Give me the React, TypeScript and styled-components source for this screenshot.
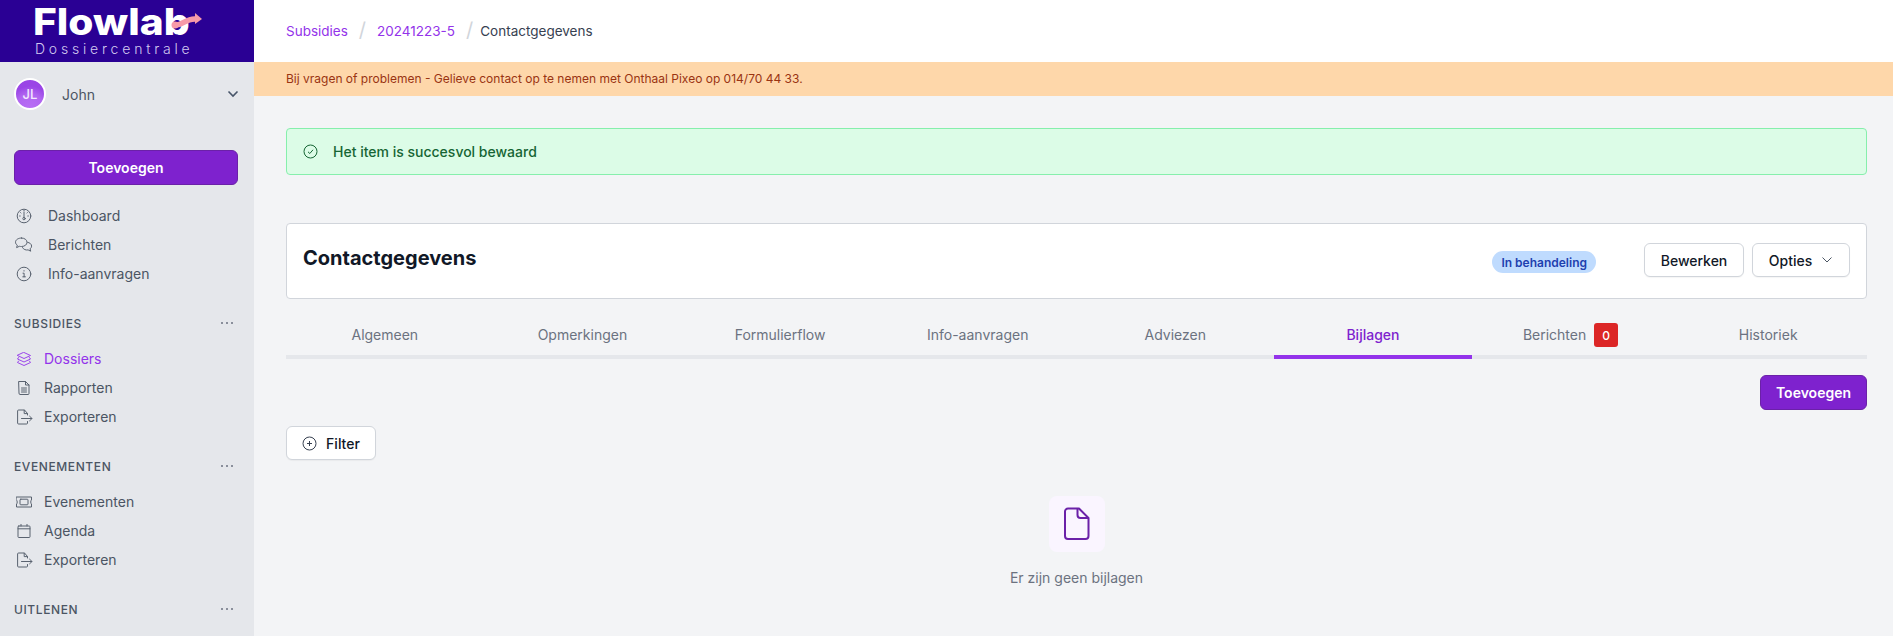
import React from 'react';
import styled, { createGlobalStyle } from 'styled-components';

const GlobalStyle = createGlobalStyle`
  html, body {
    margin: 0;
    padding: 0;
    height: 100%;
    overflow: hidden;
    background: #f3f4f6;
    font-family: Inter, "Liberation Sans", sans-serif;
  }
  * { box-sizing: border-box; }
`;

const Layout = styled.div`
  display: flex;
  width: 1893px;
  height: 636px;
  overflow: hidden;
`;

const Sidebar = styled.aside`
  width: 254px;
  flex: none;
  background: #e5e7eb;
  display: flex;
  flex-direction: column;
  overflow: hidden;
`;

const LogoBar = styled.div`
  height: 62px;
  flex: none;
  background: #2a0094;
  padding: 2px 0 0 33px;
`;

const LogoRow = styled.div`
  display: flex;
  align-items: flex-start;
  height: 40px;
`;

const LogoName = styled.span`
  display: inline-block;
  width: 155px;
  flex: none;
  font-size: 37px;
  line-height: 40px;
  font-weight: 800;
  white-space: nowrap;
  color: #fff;
  transform: scaleX(1.1);
  transform-origin: left center;
`;

const LogoArrow = styled.svg`
  position: relative;
  z-index: 1;
  width: 36px;
  height: 20px;
  flex: none;
  margin: 8px 0 0 -18px;
`;

const LogoSub = styled.div`
  font-size: 14px;
  line-height: 14px;
  padding-left: 2px;
  font-weight: 300;
  letter-spacing: 3.8px;
  white-space: nowrap;
  color: #d3c9f0;
`;

const UserRow = styled.div`
  display: flex;
  align-items: center;
  height: 32px;
  margin: 16px 0 0 14px;
  padding-right: 15px;
`;

const Avatar = styled.div`
  width: 32px;
  height: 32px;
  border-radius: 50%;
  border: 2px solid #fff;
  background: radial-gradient(circle at 50% 100%, #b86ef5 0%, #b065f0 45%, #9a45e6 70%);
  color: #f3e8ff;
  font-size: 13px;
  font-weight: 500;
  display: flex;
  align-items: center;
  justify-content: center;
`;

const UserName = styled.span`
  margin-left: 16px;
  flex: 1;
  font-size: 14px;
  color: #4b5563;
`;

const AddButton = styled.button<{ $wide?: boolean }>`
  display: block;
  width: ${p => (p.$wide ? '224px' : '107px')};
  height: 35px;
  padding: 0;
  border: 1px solid #6b21a8;
  border-radius: 6px;
  background: #7e22ce;
  color: #fff;
  font-family: inherit;
  font-size: 14px;
  font-weight: 600;
`;

const SidebarAdd = styled.div`
  margin: 40px 0 0 14px;
`;

const NavList = styled.nav`
  display: flex;
  flex-direction: column;
  margin-top: 16px;
`;

const NavItem = styled.a<{ $active?: boolean }>`
  display: flex;
  align-items: center;
  height: 29px;
  padding-left: 15px;
  font-size: 14px;
  color: ${p => (p.$active ? '#9333ea' : '#4b5563')};
`;

const NavIcon = styled.svg<{ $gap: number }>`
  width: 18px;
  height: 18px;
  flex: none;
  margin-right: ${p => p.$gap}px;
  fill: none;
  stroke: currentColor;
  stroke-width: 1;
  stroke-linecap: round;
  stroke-linejoin: round;
  opacity: 0.9;
`;

const SectionHead = styled.div`
  display: flex;
  align-items: center;
  justify-content: space-between;
  height: 16px;
  margin-top: 27px;
  padding: 0 21px 0 14px;
  font-size: 12px;
  font-weight: 450;
  letter-spacing: 0.6px;
  color: #4b5563;
`;

const SectionList = styled(NavList)`
  margin-top: 13px;
`;

const Dots = styled.span`
  display: flex;
  gap: 3px;
  i {
    width: 2px;
    height: 2px;
    border-radius: 50%;
    background: #6b7280;
  }
`;

const Main = styled.main`
  flex: 1;
  min-width: 0;
  background: #f3f4f6;
`;

const TopBar = styled.header`
  height: 62px;
  background: #fff;
  display: flex;
  align-items: center;
  padding-left: 32px;
  font-size: 13.5px;
`;

const Crumb = styled.a<{ $current?: boolean }>`
  color: ${p => (p.$current ? '#374151' : '#9333ea')};
`;

const CrumbSep = styled.span<{ $right: number }>`
  color: #d1d5db;
  font-size: 20px;
  margin: 0 ${p => p.$right}px 0 11px;
  transform: translateY(-1px);
`;

const Notice = styled.div`
  height: 34px;
  background: #fed7aa;
  color: #9a3412;
  font-size: 12px;
  line-height: 34px;
  padding-left: 32px;
`;

const Content = styled.div`
  padding: 32px 26px 0 32px;
`;

const SuccessAlert = styled.div`
  height: 47px;
  display: flex;
  align-items: center;
  gap: 15px;
  padding-left: 16px;
  background: #dcfce7;
  border: 1px solid #86efac;
  border-radius: 4px;
  color: #166534;
  font-size: 14px;
  font-weight: 450;
`;

const Card = styled.section`
  height: 76px;
  margin-top: 48px;
  display: flex;
  align-items: center;
  background: #fff;
  border: 1px solid #d1d5db;
  border-radius: 4px;
  padding: 0 16px;
`;

const CardTitle = styled.h1`
  margin: 0 0 6px;
  flex: 1;
  font-size: 20px;
  font-weight: 700;
  color: #111827;
`;

const Badge = styled.span`
  height: 22px;
  padding: 0 9px;
  display: flex;
  align-items: center;
  margin: 2px 48px 0 0;
  border-radius: 11px;
  background: #bfdbfe;
  color: #1e40af;
  font-size: 12px;
  font-weight: 600;
`;

const WhiteButton = styled.button<{ $width: number }>`
  width: ${p => p.$width}px;
  height: 34px;
  display: flex;
  align-items: center;
  justify-content: center;
  gap: 9px;
  padding: 0;
  border: 1px solid #d1d5db;
  border-radius: 6px;
  background: #fff;
  color: #111827;
  font-family: inherit;
  font-size: 14px;
  font-weight: 450;
  box-shadow: 0 1px 1px rgba(0, 0, 0, 0.04);
`;

const CardActions = styled.div`
  display: flex;
  gap: 8px;
  margin-bottom: 2px;
`;

const Tabs = styled.div`
  display: grid;
  grid-template-columns: repeat(8, 1fr);
  margin-top: 16px;
  height: 44px;
  border-bottom: 4px solid #e5e7eb;
`;

const Tab = styled.div<{ $active?: boolean }>`
  display: flex;
  align-items: center;
  justify-content: center;
  gap: 8px;
  height: 44px;
  padding-bottom: 2px;
  border-bottom: 4px solid ${p => (p.$active ? '#9333ea' : 'transparent')};
  color: ${p => (p.$active ? '#7e22ce' : '#6b7280')};
  font-size: 14px;
  font-weight: ${p => (p.$active ? 500 : 400)};
`;

const Count = styled.span`
  width: 24px;
  height: 24px;
  margin-top: 2px;
  display: flex;
  align-items: center;
  justify-content: center;
  border-radius: 3px;
  background: #dc2626;
  color: #fff;
  font-size: 12px;
  font-weight: 500;
`;

const ToolRow = styled.div`
  display: flex;
  justify-content: flex-end;
  margin-top: 16px;
`;

const FilterRow = styled.div`
  margin-top: 16px;
`;

const Empty = styled.div`
  display: flex;
  flex-direction: column;
  align-items: center;
  margin-top: 36px;
`;

const EmptyIcon = styled.div`
  width: 56px;
  height: 56px;
  display: flex;
  align-items: center;
  justify-content: center;
  border-radius: 8px;
  background: #faf5ff;
  color: #6b21a8;
`;

const EmptyText = styled.p`
  margin: 16px 0 0;
  font-size: 14px;
  line-height: 20px;
  color: #6b7280;
`;

const icons: Record<string, React.ReactNode> = {
  gauge: (
    <>
      <circle cx="9" cy="9" r="6.8" />
      <circle cx="9" cy="11.6" r="1.2" />
      <path d="M9 10.4V5M5.2 9H4.6M13.4 9h-.6M6 6l-.4-.4M12 6l.4-.4M9 3.2v.6" />
    </>
  ),
  chat: (
    <>
      <path d="M7.5 3C4.2 3 1.5 4.8 1.5 7.2c0 1.2.7 2.3 1.8 3L2.6 12.6l2.8-1.3c.7.2 1.4.2 2.1.2 3.3 0 5.5-1.9 5.5-4.2S10.8 3 7.5 3z" transform="translate(-1 -1)" />
      <path d="M12.6 6.3c2.2.4 4 1.8 4 3.8 0 1.1-.6 2-1.5 2.7l.6 2.4-2.6-1.3c-2.2.4-4.6-.3-5.6-2.3" />
    </>
  ),
  info: (
    <>
      <circle cx="9" cy="9" r="6.8" />
      <path d="M8 8.2h1.1v3.6M7.8 11.8h2.6M9 5.6v.5" />
    </>
  ),
  layers: (
    <>
      <path d="M9 2.5l6.5 3-6.5 3-6.5-3z" />
      <path d="M3.6 7.5L2.5 9 9 12l6.5-3-1.1-1.5" />
      <path d="M3.6 11L2.5 12.5 9 15.5l6.5-3-1.1-1.5" />
    </>
  ),
  report: (
    <>
      <path d="M4 2.5h6.5L14 6v8.5a1 1 0 01-1 1H5a1 1 0 01-1-1z" />
      <path d="M10.5 2.5V6H14M6.5 9h5M6.5 11h5M6.5 13h5" />
    </>
  ),
  export: (
    <>
      <path d="M12.5 7V5.5L9.5 2H3.6a1 1 0 00-1 1v12a1 1 0 001 1h7.9a1 1 0 001-1v-1.5" />
      <path d="M9.2 2.2V5.6h3.2M6.5 10.5h10.5M14.6 8.2l2.4 2.3-2.4 2.3" />
    </>
  ),
  ticket: (
    <>
      <path d="M1.5 4h15v3c-1 .4-1 3.6 0 4v3h-15v-3c1-.4 1-3.6 0-4z" />
      <rect x="5" y="6.2" width="8" height="5.6" rx="0.8" />
    </>
  ),
  calendar: (
    <>
      <rect x="3" y="4" width="12" height="11.5" rx="0.8" />
      <path d="M3 6.8h12M6 2.4V4M12 2.4V4" />
    </>
  ),
};

const Icon: React.FC<{ name: string; gap: number }> = ({ name, gap }) => (
  <NavIcon $gap={gap} viewBox="0 0 18 18">
    {icons[name]}
  </NavIcon>
);

const sections = [
  {
    title: 'SUBSIDIES',
    items: [
      { label: 'Dossiers', icon: 'layers', active: true },
      { label: 'Rapporten', icon: 'report' },
      { label: 'Exporteren', icon: 'export' },
    ],
  },
  {
    title: 'EVENEMENTEN',
    items: [
      { label: 'Evenementen', icon: 'ticket' },
      { label: 'Agenda', icon: 'calendar' },
      { label: 'Exporteren', icon: 'export' },
    ],
  },
  { title: 'UITLENEN', items: [] },
];

const tabs = ['Algemeen', 'Opmerkingen', 'Formulierflow', 'Info-aanvragen', 'Adviezen', 'Bijlagen', 'Berichten', 'Historiek'];

const App: React.FC = () => (
  <Layout>
    <GlobalStyle />
    <Sidebar>
      <LogoBar>
        <LogoRow>
          <LogoName>Flowlab</LogoName>
          <LogoArrow viewBox="0 0 36 20">
            <circle cx="5" cy="15" r="3.5" fill="#f79aa8" />
            <path d="M5 15c7 1 11-7 21-6" fill="none" stroke="#f79aa8" strokeWidth="5.5" strokeLinecap="round" />
            <path d="M25 3l7 6-7 5z" fill="#f79aa8" />
          </LogoArrow>
        </LogoRow>
        <LogoSub>Dossiercentrale</LogoSub>
      </LogoBar>

      <UserRow>
        <Avatar>JL</Avatar>
        <UserName>John</UserName>
        <svg width="12" height="8" viewBox="0 0 12 8" fill="none" stroke="#475569" strokeWidth="1.6">
          <path d="M1.5 1.5L6 6l4.5-4.5" />
        </svg>
      </UserRow>

      <SidebarAdd>
        <AddButton $wide>Toevoegen</AddButton>
      </SidebarAdd>

      <NavList>
        <NavItem><Icon name="gauge" gap={15} />Dashboard</NavItem>
        <NavItem><Icon name="chat" gap={15} />Berichten</NavItem>
        <NavItem><Icon name="info" gap={15} />Info-aanvragen</NavItem>
      </NavList>

      {sections.map(section => (
        <React.Fragment key={section.title}>
          <SectionHead>
            {section.title}
            <Dots><i /><i /><i /></Dots>
          </SectionHead>
          {section.items.length > 0 && (
            <SectionList>
              {section.items.map(item => (
                <NavItem key={item.label} $active={item.active}>
                  <Icon name={item.icon} gap={11} />
                  {item.label}
                </NavItem>
              ))}
            </SectionList>
          )}
        </React.Fragment>
      ))}
    </Sidebar>

    <Main>
      <TopBar>
        <Crumb>Subsidies</Crumb>
        <CrumbSep $right={11}>/</CrumbSep>
        <Crumb>20241223-5</Crumb>
        <CrumbSep $right={7}>/</CrumbSep>
        <Crumb $current>Contactgegevens</Crumb>
      </TopBar>
      <Notice>Bij vragen of problemen - Gelieve contact op te nemen met Onthaal Pixeo op 014/70 44 33.</Notice>

      <Content>
        <SuccessAlert>
          <svg width="15" height="15" viewBox="0 0 15 15" fill="none" stroke="#166534">
            <circle cx="7.5" cy="7.5" r="6.5" />
            <path d="M5 7.8l1.8 1.7L10 5.8" />
          </svg>
          Het item is succesvol bewaard
        </SuccessAlert>

        <Card>
          <CardTitle>Contactgegevens</CardTitle>
          <Badge>In behandeling</Badge>
          <CardActions>
            <WhiteButton $width={100}>Bewerken</WhiteButton>
            <WhiteButton $width={98}>
              Opties
              <svg width="12" height="8" viewBox="0 0 12 8" fill="none" stroke="#4b5563">
                <path d="M1.5 1.5L6 6l4.5-4.5" />
              </svg>
            </WhiteButton>
          </CardActions>
        </Card>

        <Tabs>
          {tabs.map(tab => (
            <Tab key={tab} $active={tab === 'Bijlagen'}>
              {tab}
              {tab === 'Berichten' && <Count>0</Count>}
            </Tab>
          ))}
        </Tabs>

        <ToolRow>
          <AddButton>Toevoegen</AddButton>
        </ToolRow>

        <FilterRow>
          <WhiteButton $width={90}>
            <svg width="15" height="15" viewBox="0 0 15 15" fill="none" stroke="#374151">
              <circle cx="7.5" cy="7.5" r="6.5" />
              <path d="M7.5 5v5M5 7.5h5" />
            </svg>
            Filter
          </WhiteButton>
        </FilterRow>

        <Empty>
          <EmptyIcon>
            <svg width="26" height="34" viewBox="0 0 26 34" fill="none" stroke="currentColor" strokeWidth="2" strokeLinejoin="round">
              <path d="M4 1.5h11L24.5 11v18a3 3 0 01-3 3H4a3 3 0 01-3-3V4.5a3 3 0 013-3z" />
              <path d="M13.5 1.5V8a3 3 0 003 3h8" />
            </svg>
          </EmptyIcon>
          <EmptyText>Er zijn geen bijlagen</EmptyText>
        </Empty>
      </Content>
    </Main>
  </Layout>
);

export default App;
